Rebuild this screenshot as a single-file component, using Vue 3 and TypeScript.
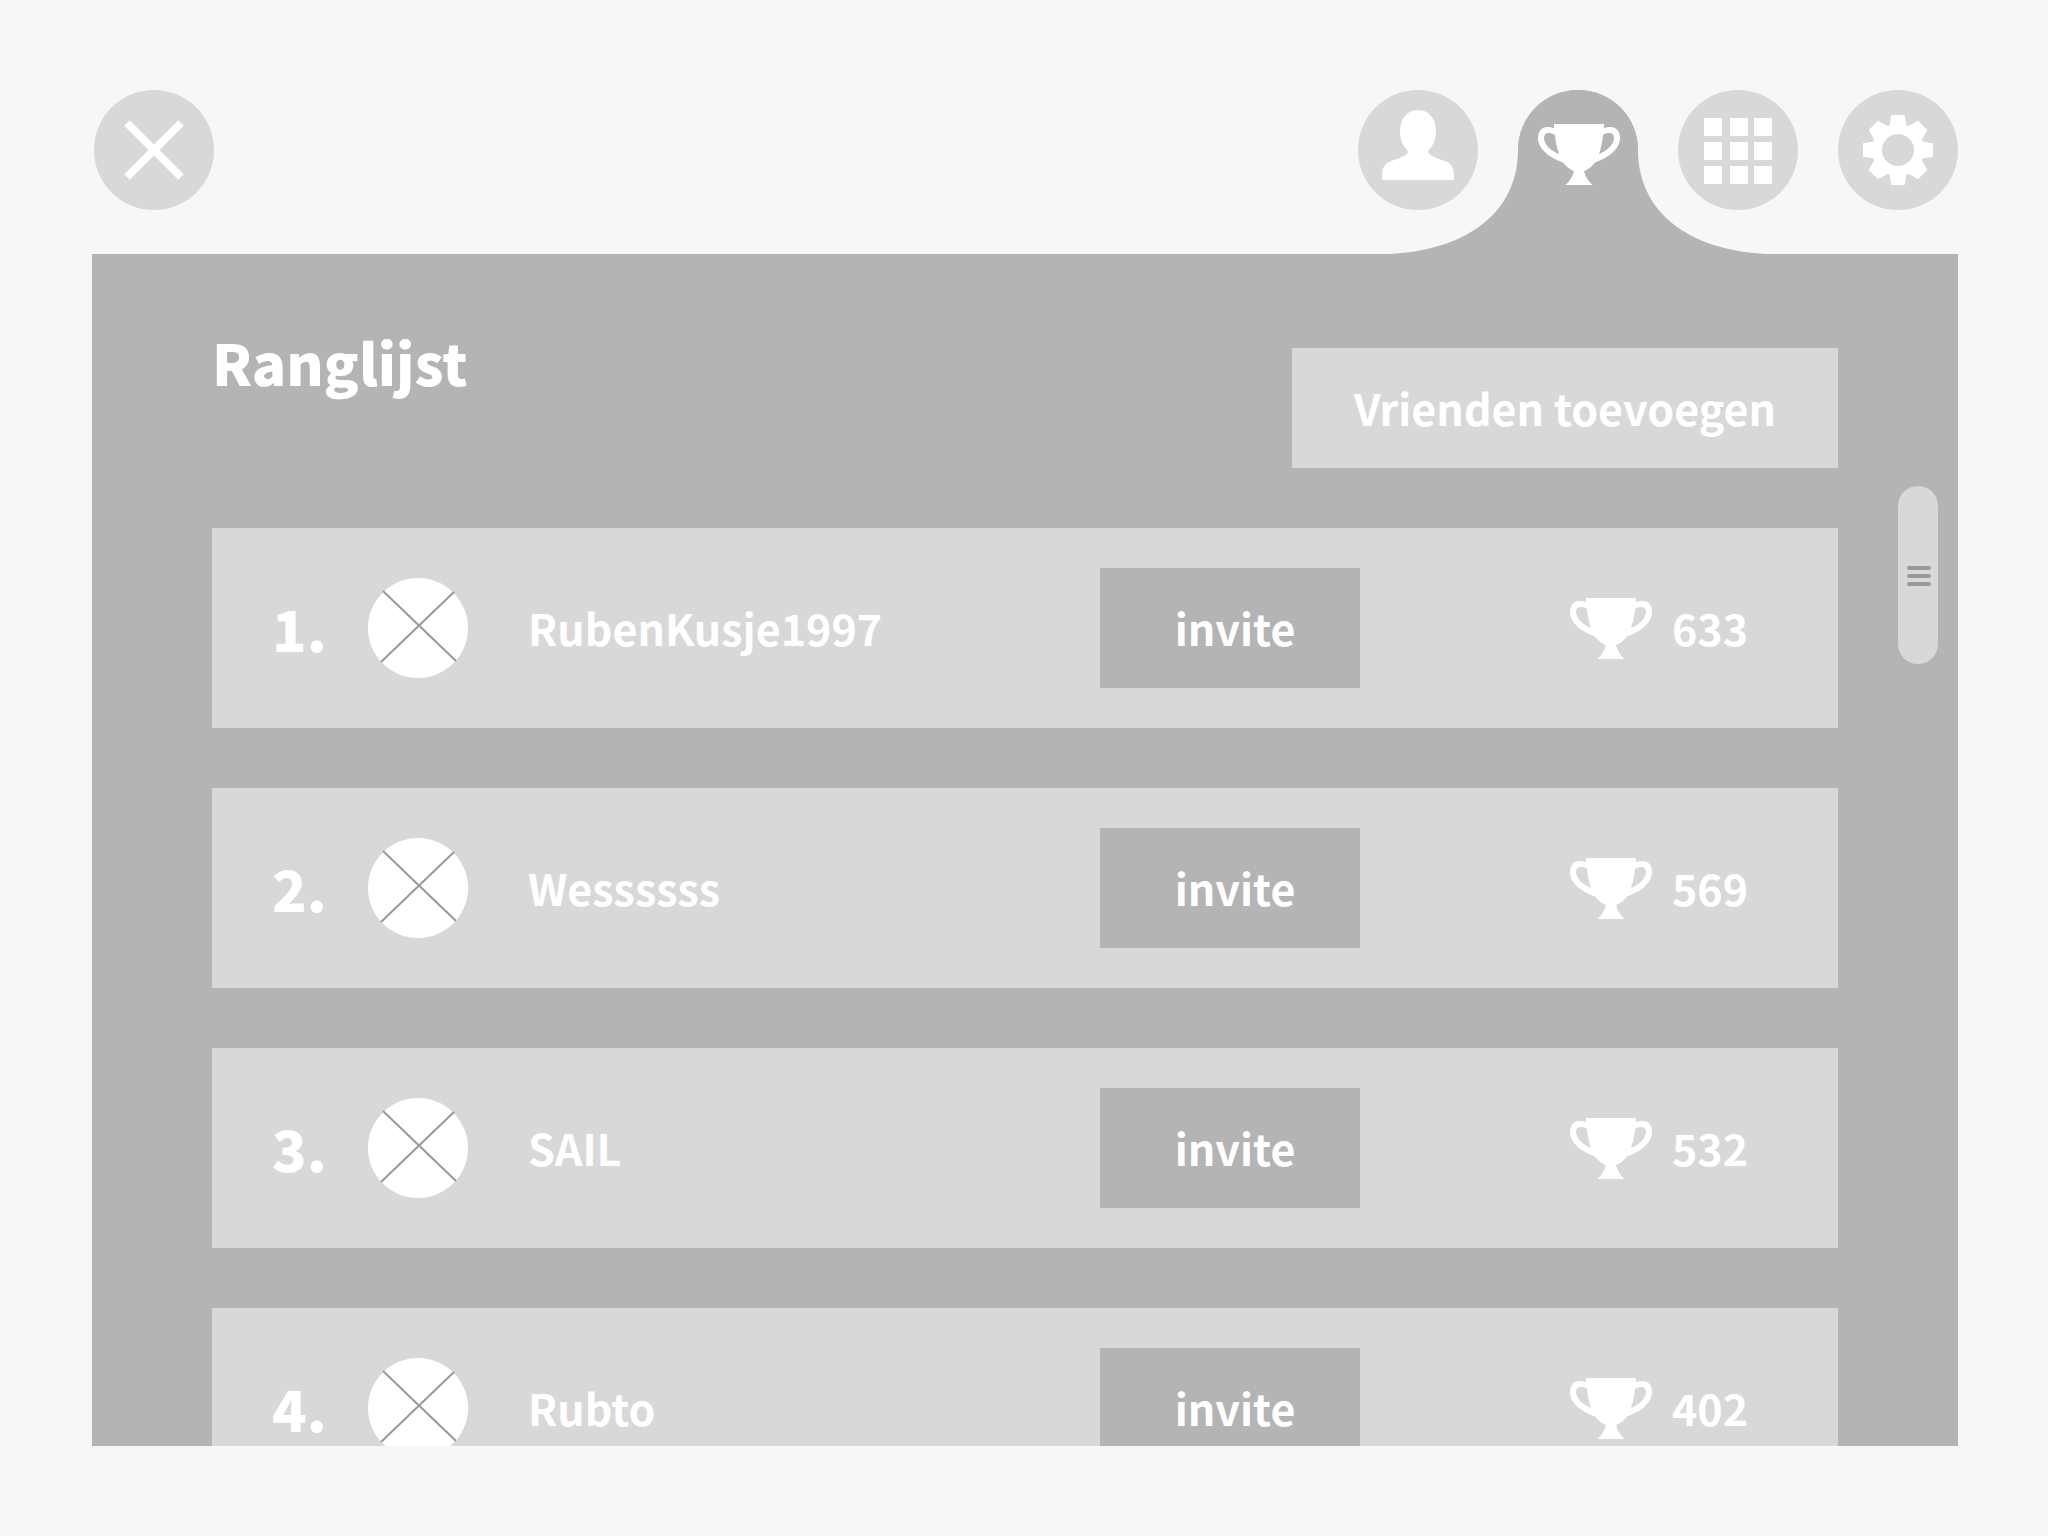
<script setup lang="ts">
import { ref } from 'vue'

interface Player {
  rank: number
  name: string
  score: number
}

const players: Player[] = [
  { rank: 1, name: 'RubenKusje1997', score: 633 },
  { rank: 2, name: 'Wessssss', score: 569 },
  { rank: 3, name: 'SAIL', score: 532 },
  { rank: 4, name: 'Rubto', score: 402 },
]

const invited = ref<Set<string>>(new Set())

function invite(player: Player): void {
  invited.value.add(player.name)
}

const trophyPath =
  'M16 0H66V4.3C68 3.400 70 3 72.500 3C78.500 3 82 7.500 82 14C82 25 70 34 57 38.500C54.500 42 50.500 45.500 46 47.200C47.500 52.500 50.500 57.500 54.500 61H27.500C31.500 57.500 34.500 52.500 36 47.200C31.500 45.500 27.500 42 25 38.500C12 34 0 25 0 14C0 7.500 3.500 3 9.500 3C12 3 14 3.400 16 4.300Z' +
  'M17 11C15 9.500 13 9 10.500 9C7.500 9 6 11 6 14C6 20 13 27 21 30C19 24 17.500 18 17 11Z' +
  'M65 11C67 9.500 69 9 71.500 9C74.500 9 76 11 76 14C76 20 69 27 61 30C63 24 64.500 18 65 11Z'

const gearPath =
  'M-6.7-35L6.7-35L8.3-25.3Q9-23.3 11-24.2L20-29.3L29.3-20L24.2-11Q23.3-9 25.3-8.3L35-6.7' +
  'L35 6.7L25.3 8.3Q23.3 9 24.2 11L29.3 20L20 29.3L11 24.2Q9 23.3 8.3 25.3L6.7 35' +
  'L-6.7 35L-8.3 25.3Q-9 23.3-11 24.2L-20 29.3L-29.3 20L-24.2 11Q-23.3 9-25.3 8.3L-35 6.7' +
  'L-35-6.7L-25.3-8.3Q-23.3-9-24.2-11L-29.3-20L-20-29.3L-11-24.2Q-9-23.3-8.3-25.3Z' +
  'M16 0A16 16 0 1 0-16 0A16 16 0 1 0 16 0Z'

const gridOffsets = { x: [26, 52, 76], y: [28, 52, 76] }
</script>

<template>
  <div class="page">
    <header class="topbar">
      <button class="round" type="button" aria-label="Sluiten">
        <svg viewBox="0 0 120 120" aria-hidden="true">
          <path d="M33 33L87 87M87 33L33 87" stroke="#fff" stroke-width="8" />
        </svg>
      </button>

      <nav class="tabs">
        <button class="round" type="button" aria-label="Profiel">
          <svg viewBox="0 0 120 120" aria-hidden="true">
            <path
              fill="#fff"
              d="M60 20C71 20 78 29 78 41C78 49 75 56 71 60C69.500 61.700 70 62.800 71.500 64C76 68 83 69.500 88 71.500C94 74 96 79 96 86V88Q96 90 94 90H26Q24 90 24 88V86C24 79 26 74 32 71.500C37 69.500 44 68 48.500 64C50 62.800 50.500 61.700 49 60C45 56 42 49 42 41C42 29 49 20 60 20Z"
            />
          </svg>
        </button>

        <button class="round active" type="button" aria-label="Ranglijst" aria-current="page">
          <svg class="hill" viewBox="0 0 400 164" aria-hidden="true">
            <path
              fill="#b4b4b4"
              d="M12 164C92 160 140 120 140 60A60 60 0 0 1 260 60C260 120 308 160 388 164Z"
            />
          </svg>
          <svg class="tab-trophy" viewBox="0 0 82 61" aria-hidden="true">
            <path fill="#fff" fill-rule="evenodd" :d="trophyPath" />
          </svg>
        </button>

        <button class="round" type="button" aria-label="Spellen">
          <svg viewBox="0 0 120 120" fill="#fff" aria-hidden="true">
            <template v-for="y in gridOffsets.y" :key="y">
              <rect v-for="x in gridOffsets.x" :key="x" :x="x" :y="y" width="18" height="18" />
            </template>
          </svg>
        </button>

        <button class="round" type="button" aria-label="Instellingen">
          <svg viewBox="-60 -60 120 120" aria-hidden="true">
            <path fill="#fff" fill-rule="evenodd" :d="gearPath" />
          </svg>
        </button>
      </nav>
    </header>

    <main class="panel">
      <div class="content">
        <div class="heading">
          <h1>Ranglijst</h1>
          <button class="add" type="button">Vrienden toevoegen</button>
        </div>

        <ol class="list">
          <li v-for="player in players" :key="player.rank" class="row">
            <span class="rank">{{ player.rank }}.</span>
            <svg class="avatar" viewBox="0 0 100 100" aria-hidden="true">
              <circle cx="50" cy="50" r="50" fill="#fff" />
              <path d="M15 13L88 83M86 14L13 84" stroke="#999" stroke-width="2" />
            </svg>
            <span class="name">{{ player.name }}</span>
            <button
              class="invite"
              type="button"
              :disabled="invited.has(player.name)"
              @click="invite(player)"
            >
              invite
            </button>
            <svg class="trophy" viewBox="0 0 82 61" aria-hidden="true">
              <path fill="#fff" fill-rule="evenodd" :d="trophyPath" />
            </svg>
            <span class="score">{{ player.score }}</span>
          </li>
        </ol>
      </div>

      <div class="rail">
        <div class="thumb">
          <span class="grip"></span>
          <span class="grip"></span>
          <span class="grip"></span>
        </div>
      </div>
    </main>
  </div>
</template>

<style>
body {
  background: #f7f7f7;
}
</style>

<style scoped>
.page {
  display: flex;
  flex-direction: column;
  box-sizing: border-box;
  height: 100vh;
  padding: 90px 90px 90px 92px;
  background: #f7f7f7;
  color: #fff;
  font-family: 'Noto Sans CJK SC', 'Noto Sans', sans-serif;
  font-size: 43px;
  font-weight: 700;
  line-height: 60px;
}

button {
  margin: 0;
  padding: 0;
  border: 0;
  color: inherit;
  font: inherit;
  cursor: pointer;
}

.topbar {
  display: flex;
  flex: none;
  justify-content: space-between;
  padding: 0 0 44px 2px;
}

.tabs {
  display: flex;
  gap: 40px;
}

.round {
  position: relative;
  width: 120px;
  height: 120px;
  border-radius: 50%;
  background: #d8d8d8;
}

.round svg {
  display: block;
}

.round.active {
  background: #b4b4b4;
}

.round .hill {
  position: absolute;
  top: 0;
  left: -140px;
  width: 400px;
  height: 164px;
  pointer-events: none;
}

.round .tab-trophy {
  position: relative;
  width: 82px;
  height: 61px;
  margin: 8px 0 0 20px;
}

.panel {
  display: flex;
  flex: 1;
  min-height: 0;
  padding-left: 120px;
  overflow: hidden;
  background: #b4b4b4;
}

.content {
  flex: 1;
  min-width: 0;
  padding-top: 60px;
}

.heading {
  display: flex;
  align-items: flex-end;
  justify-content: space-between;
  margin-bottom: 60px;
}

h1 {
  align-self: flex-start;
  margin: 0;
  font-size: 57px;
  font-weight: 900;
  line-height: 94px;
}

.add {
  min-width: 546px;
  height: 120px;
  margin-top: 34px;
  padding: 0 56px 2px;
  background: #d8d8d8;
}

.list {
  display: flex;
  flex-direction: column;
  gap: 60px;
  margin: 0;
  padding: 0;
  list-style: none;
}

.row {
  display: flex;
  align-items: center;
  height: 200px;
  padding-left: 60px;
  background: #d8d8d8;
}

.rank,
.name,
.score {
  padding-bottom: 2px;
}

.rank {
  width: 96px;
  font-size: 57px;
  font-weight: 900;
}

.avatar {
  width: 100px;
  height: 100px;
  margin-right: 60px;
}

.name {
  flex: 1;
  min-width: 0;
}

.invite {
  width: 260px;
  height: 120px;
  padding: 0 0 2px 10px;
  background: #b4b4b4;
}

.trophy {
  width: 82px;
  height: 61px;
  margin: 0 20px 0 210px;
}

.score {
  width: 166px;
}

.rail {
  flex: none;
  width: 120px;
}

.thumb {
  display: flex;
  flex-direction: column;
  align-items: center;
  justify-content: center;
  gap: 4px;
  box-sizing: border-box;
  width: 40px;
  height: 178px;
  margin: 232px 0 0 60px;
  padding: 2px 0 0 2px;
  border-radius: 20px;
  background: #d8d8d8;
}

.grip {
  width: 24px;
  height: 4px;
  border-radius: 2px;
  background: #999;
}
</style>
